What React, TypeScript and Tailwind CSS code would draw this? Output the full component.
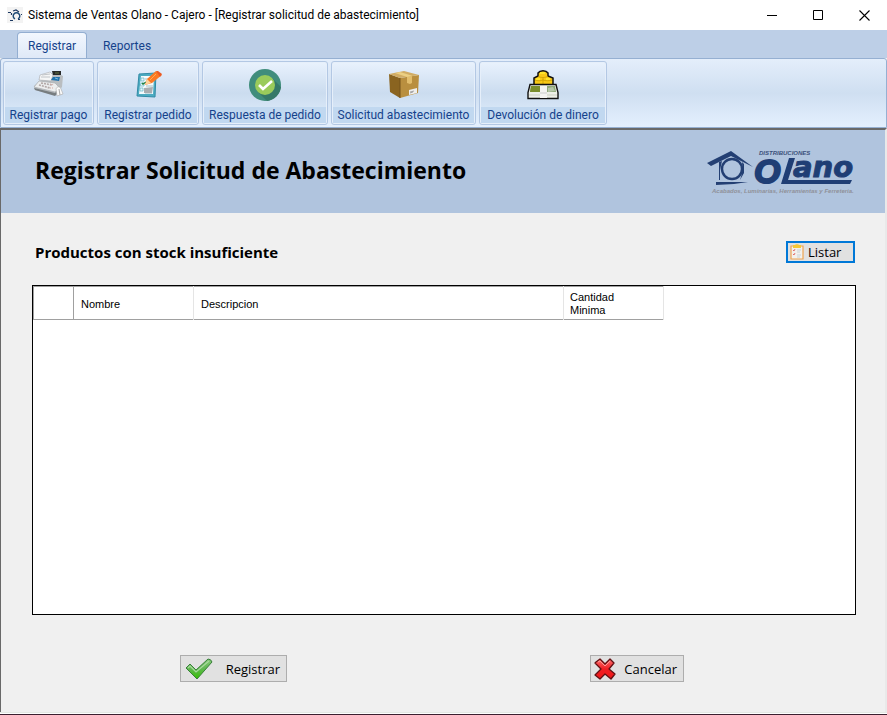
import type { ReactNode } from "react";

function AppIcon() {
  return (
    <svg viewBox="0 0 16 16" className="h-4 w-4 bg-[#f3f3f3]" aria-hidden="true">
      <path d="M1 5.500h3M6 4l3-1 3 2M4.500 6v2M3 13.500h3" fill="none" stroke="#1d3a63" strokeWidth="1.200" />
      <path d="M8 12a3.300 3.300 0 1 1 3 0" fill="none" stroke="#1d4a75" strokeWidth="1.400" />
      <path d="M11 12.500h2M14 7.500h1" stroke="#1d3a63" />
    </svg>
  );
}

function RegisterIcon() {
  return (
    <svg viewBox="0 0 32 32" className="h-8 w-8" aria-hidden="true">
      <path d="M7 12 22 3 30 7 29 18 22 26 2 21 1 17Z" fill="#b9bdc0" />
      <path d="M7 6 17 3 20 6 18 12 6 11Z" fill="#f5f6f6" stroke="#a7aaad" strokeWidth=".6" />
      <path d="m9 6 8-1M8 8l9 0" stroke="#c0c4c8" />
      <path d="m19 2 9 0 0 4-8 0Z" fill="#292b2a" />
      <path d="m22 4 4 0" stroke="#647540" />
      <path d="m20 8 7 0-1 4-8-1Z" fill="#2273ad" />
      <path d="m22 9 3 1" stroke="#7fc0e5" />
      <path d="m6 12 16 2 5 5-5 4L1 18Z" fill="#eceeef" stroke="#a9adb0" strokeWidth=".7" />
      <path d="m8 14 11 2m-13 0 11 3" stroke="#b3a9a8" strokeWidth="1.6" strokeDasharray="2 1" />
      <path d="m17 15 4 1m-4 3 4 0" stroke="#d8a9a0" strokeDasharray="1 1" />
      <path d="m1 19 21 5 4-4v3l-4 4L2 21Z" fill="#777d80" />
      <path d="M23 20c1-3 4-3 5 0l2 5-6 2Z" fill="#fafafa" stroke="#aaa" strokeWidth=".6" />
      <path d="m26 20 1 6" stroke="#aaa" />
    </svg>
  );
}

function OrderIcon() {
  return (
    <svg viewBox="0 0 32 32" className="h-8 w-8" aria-hidden="true">
      <path d="m7 5 17-1-1 24-18-1Z" fill="#4cabc1" stroke="#328ba6" />
      <path d="m9 7 13 0-1 18-14 0Z" fill="#f4fbfd" />
      <path d="M9 9h3v3H9Zm0 5h3v3H8Zm-1 5h3v3H8Z" fill="#e6f7fb" stroke="#62b5c7" strokeWidth=".7" />
      <path d="m10 14 1 1 3-2" fill="none" stroke="#238345" strokeWidth="1.500" />
      <path d="m13 10 5 0m-4 7 7 0m-8 7 7 0" stroke="#a5bec5" />
      <path d="m12 19 9-1-1 6-8 0Z" fill="#a9adb0" />
      <path d="m13 16 2-6L24 2l6 4-10 8Z" fill="#fb7925" />
      <path d="m24 2 2 0 4 3-2 3Z" fill="#ea5a25" />
      <path d="m15 10 4 4-6 2Z" fill="#ffd39c" />
      <path d="m18 11 6-6" stroke="#ffae4e" />
    </svg>
  );
}

function CheckCircleIcon() {
  return (
    <svg viewBox="0 0 32 32" className="h-8 w-8" aria-hidden="true">
      <circle cx="16" cy="16" r="16" fill="#408d7c" />
      <path d="m23 9 9 9A16 16 0 0 1 18 32L8 22Z" fill="#357968" />
      <circle cx="16" cy="16" r="10" fill="#9acb5b" />
      <path d="m10 16 4 4 9-8" fill="none" stroke="#fff" strokeWidth="2.600" />
    </svg>
  );
}

function BoxIcon() {
  return (
    <svg viewBox="0 0 32 32" className="h-8 w-8" aria-hidden="true">
      <path d="m1 5 11 4 0 20L2 23Z" fill="#8a6420" />
      <path d="m12 9 19-3-1 18-18 5Z" fill="#b98f3f" />
      <path d="M1 5 16 2l15 4-19 3Z" fill="#d1ac64" />
      <path d="m7 4 5-1 13 4-6 1Z" fill="#ecd083" />
      <path d="m19 8 5-1v7l-2 1-3-1Z" fill="#e2bd6c" />
      <path d="M12 9v20" stroke="#75521b" />
      <path d="m21 21 8-2v5l-8 2Z" fill="#eee" />
      <path d="m22 23 4-1m-4 2 3-1" stroke="#888" strokeWidth=".7" />
    </svg>
  );
}

function MoneyIcon() {
  return (
    <svg viewBox="0 0 32 32" className="h-8 w-8" aria-hidden="true">
      <path d="M7 17V9l4-2V4c2-3 8-3 10 0v3l5 2v8Z" fill="#f9c916" stroke="#111" strokeWidth="1.500" />
      <path d="M11 7c2 2 8 2 10 0M8 11c2 1 6 1 8 0m0 0c2 1 7 1 9 0M16 9v6" fill="none" stroke="#c79a00" strokeWidth=".7" />
      <path d="m13 4 5 0M9 10l4 0m6 0 4 0" stroke="#ffec36" strokeWidth="1.400" />
      <path d="M3 15.500h26l2 8v6H1v-6Z" fill="#eef0e8" stroke="#111" strokeWidth="1.400" />
      <path d="M4 17h24l1 6H3Z" fill="#8ea878" />
      <path d="M4 17h9v6H3Z" fill="#7b8e2c" />
      <path d="m21 19 5-1 2 4-7 1Z" fill="#b5c6a8" />
      <path d="M2 26h28" stroke="#cfd2c6" />
      <path d="M13 17h7v12h-7Z" fill="#f4f4f2" />
      <path d="M13 24h7" stroke="#ccc" />
    </svg>
  );
}

function ClipboardIcon() {
  return (
    <svg viewBox="0 0 14 16" className="h-4 w-3.5" aria-hidden="true">
      <path d="M1 2h12v13H1Z" fill="#f3f1ed" stroke="#eda451" strokeWidth="1.200" />
      <path d="M3 1h2c0-1 4-1 4 0h2v3H3Z" fill="#f6c936" />
      <path d="m3 6 1 1 1-2M3 10l1 1 1-2" fill="none" stroke="#df6261" strokeWidth=".9" />
      <path d="M7 6h4M7 8h3m-3 3h4m-4 2h3" stroke="#c8d3d8" />
    </svg>
  );
}

function GreenCheckIcon() {
  return (
    <svg viewBox="0 0 28 22" className="h-[22px] w-7" aria-hidden="true">
      <defs>
        <linearGradient id="green" x2="0" y2="1">
          <stop stopColor="#86c779" />
          <stop offset=".5" stopColor="#5fb84f" />
          <stop offset="1" stopColor="#35c000" />
        </linearGradient>
      </defs>
      <path d="m1 10 4-4 6 6L23 1q3 0 4 3L12 21Z" fill="url(#green)" stroke="#39803a" strokeLinejoin="round" />
      <path d="m3 10 2-2 6 6L24 3" fill="none" stroke="#a9d99e" strokeWidth="1.200" />
    </svg>
  );
}

function RedCrossIcon() {
  return (
    <svg viewBox="0 0 22 22" className="h-[22px] w-[22px]" aria-hidden="true">
      <defs>
        <linearGradient id="red" x2="0" y2="1">
          <stop stopColor="#ff7373" />
          <stop offset=".5" stopColor="#f01d22" />
          <stop offset="1" stopColor="#ef1717" />
        </linearGradient>
      </defs>
      <path
        d="M2 4 6 1l5 5 5-5 4 4-5 6 6 5-4 5-6-5-5 5-5-4 6-6-6-6Z"
        fill="url(#red)"
        stroke="#611013"
        strokeWidth="1.300"
        strokeLinejoin="round"
      />
      <path d="m4 4 2-1 5 5 5-5" fill="none" stroke="#ff9a96" />
    </svg>
  );
}

function RibbonButton({ label, icon, width }: { label: string; icon: ReactNode; width: string }) {
  return (
    <button
      type="button"
      className={`flex h-16 shrink-0 flex-col items-center rounded-[3px] border border-[#b3c8e4] bg-linear-to-b from-[#e9f2fd] via-[#cbdcef] to-[#e2effd] p-px shadow-[inset_0_0_0_1px_#e6effa] ${width}`}
    >
      <span className="flex h-[46px] items-center">{icon}</span>
      <span className="flex h-4 w-full items-center justify-center bg-[#c1d8f0] text-[12px] leading-4 whitespace-nowrap text-[#15428b]">
        {label}
      </span>
    </button>
  );
}

function Logo() {
  return (
    <svg viewBox="0 0 150 50" className="h-[50px] w-[150px]" role="img" aria-label="Distribuciones Olano">
      <path d="M1 16 25 4 47 20 25 9 5 19Z" fill="#233f73" />
      <path d="m13 15 3-1-2 9 0 10-1 0Z" fill="#233f73" />
      <path d="M10 35 42 35 28 37 10 38Z" fill="#233f73" />
      <circle cx="26" cy="22" r="10" fill="none" stroke="#233f73" strokeWidth="2.400" />
      <path d="m36 15 2 2v9l-4 7c2-6 3-11 2-18Z" fill="#233f73" />
      <g fontStyle="italic" fontWeight="bold">
        <text x="53" y="8" fontSize="6" fontFamily="Liberation Sans, Arial, sans-serif" fill="#3c517b">
          DISTRIBUCIONES
        </text>
        <text x="48" y="36" fontSize="34" fontFamily="Liberation Sans, Arial, sans-serif" fill="#1f3e75" stroke="#1f3e75" strokeWidth="2">
          O
        </text>
        <text x="87" y="30" fontSize="29" fontFamily="DejaVu Sans, Verdana, sans-serif" fill="#1f3e75" stroke="#1f3e75">
          ano
        </text>
        <text x="6" y="46" fontSize="6" fontFamily="Liberation Sans, Arial, sans-serif" fill="#8f9199">
          Acabados, Luminarias, Herramientas y Ferreteria.
        </text>
      </g>
      <path d="M83 11h6l-7 22h64l-2 4H75Z" fill="#1f3e75" />
    </svg>
  );
}

function TitleBar() {
  return (
    <header className="flex h-[30px] items-center justify-between bg-white pl-[7px] font-[Roboto,sans-serif] text-[12px] text-black">
      <div className="flex items-center gap-[5px]">
        <AppIcon />
        <span className="whitespace-nowrap">Sistema de Ventas Olano - Cajero - [Registrar solicitud de abastecimiento]</span>
      </div>
      <div className="flex h-full">
        <button type="button" aria-label="Minimizar" className="flex w-[46px] items-center justify-center">
          <svg viewBox="0 0 11 11" className="size-[11px]"><path d="M0 5.5h10" stroke="#000" /></svg>
        </button>
        <button type="button" aria-label="Maximizar" className="flex w-[46px] items-center justify-center">
          <svg viewBox="0 0 11 11" className="size-[11px]"><path d="M.5.5h9v9h-9Z" fill="none" stroke="#000" /></svg>
        </button>
        <button type="button" aria-label="Cerrar" className="flex w-[46px] items-center justify-center">
          <svg viewBox="0 0 11 11" className="size-[11px]"><path d="m.5.5 10 10m0-10-10 10" stroke="#000" strokeWidth="1.1" /></svg>
        </button>
      </div>
    </header>
  );
}

export default function App() {
  return (
    <div className="flex min-h-screen flex-col bg-[#f0f0f0] font-['Open_Sans','Noto_Sans',sans-serif] text-black">
      <TitleBar />

      <nav className="flex h-7 items-end bg-[#bdcfe7] pl-[17px] font-[Roboto,sans-serif] text-[12px] text-[#15428b]">
        <button type="button" className="h-[26px] w-[70px] rounded-t-[4px] border border-b-0 border-[#93aed1] bg-linear-to-b from-[#f2f7fe] to-[#dfe9f7]">
          Registrar
        </button>
        <button type="button" className="h-[26px] w-20 pt-px">Reportes</button>
      </nav>

      <div className="flex h-[70px] gap-[3px] rounded-t-[3px] border border-[#96b0d2] bg-linear-to-b from-[#e4eefb] via-[#cfdff1] to-[#e4f0fe] px-[2px] pt-[2px] font-[Roboto,sans-serif]">
        <RibbonButton width="w-[91px]" label="Registrar pago" icon={<RegisterIcon />} />
        <RibbonButton width="w-[102px]" label="Registrar pedido" icon={<OrderIcon />} />
        <RibbonButton width="w-[126px]" label="Respuesta de pedido" icon={<CheckCircleIcon />} />
        <RibbonButton width="w-[145px]" label="Solicitud abastecimiento" icon={<BoxIcon />} />
        <RibbonButton width="w-[128px]" label="Devolución de dinero" icon={<MoneyIcon />} />
      </div>

      <main className="flex grow flex-col border-t-2 border-r-2 border-l border-t-[#696969] border-r-[#e9e9e9] border-l-[#696969]">
        <div className="flex h-[83px] items-center justify-between bg-[#b0c4de] pr-[29px] pl-[34px]">
          <h1 className="pb-1 text-[23px] leading-8 font-bold">Registrar Solicitud de Abastecimiento</h1>
          <Logo />
        </div>

        <section className="flex grow flex-col pr-[29px] pl-[31px]">
          <div className="flex items-center justify-between pt-7 pr-px pb-[22px]">
            <h2 className="pl-[3px] text-[15px] leading-[22px] font-bold">Productos con stock insuficiente</h2>
            <button type="button" className="flex h-[22px] w-[69px] items-center gap-1 border-2 border-[#0078d7] bg-[#e1e1e1] pl-[2px] text-[13px]">
              <ClipboardIcon />
              <span className="pt-[2px]">Listar</span>
            </button>
          </div>

          <div className="min-h-[330px] grow border border-black bg-white">
            <table className="w-[630px] table-fixed border-collapse text-left font-['Liberation_Sans',Arial,sans-serif] text-[11px] leading-[13px]">
              <thead>
                <tr className="h-[33px] border-t border-b border-[#a0a0a0]">
                  <th className="w-[40px] border-r border-l border-[#a0a0a0]" aria-label="Fila" />
                  <th className="w-[120px] border-r border-r-[#e5e5e5] pt-[2px] pl-[7px] font-normal">Nombre</th>
                  <th className="w-[370px] border-r border-r-[#e5e5e5] pt-[2px] pl-[7px] font-normal">Descripcion</th>
                  <th className="w-[100px] border-r border-r-[#e5e5e5] pt-[2px] pr-10 pl-[6px] font-normal">Cantidad Minima</th>
                </tr>
              </thead>
            </table>
          </div>

          <div className="grid grid-cols-2 pt-10 pb-[30px] text-[13px]">
            <div className="pl-[148px]">
              <button type="button" className="flex h-[27px] w-[107px] items-center justify-between border border-[#adadad] bg-[#e1e1e1] pr-[6px] pl-1">
                <GreenCheckIcon />
                <span className="pt-[2px]">Registrar</span>
              </button>
            </div>
            <div className="pl-[146px]">
              <button type="button" className="flex h-[27px] w-[94px] items-center justify-between border border-[#adadad] bg-[#e1e1e1] pr-[6px] pl-[3px]">
                <RedCrossIcon />
                <span className="pt-[2px]">Cancelar</span>
              </button>
            </div>
          </div>
        </section>
      </main>
      <footer className="h-[3px] border-t border-b border-t-[#e3e8e3] border-b-[#3b2030] bg-white" />
    </div>
  );
}
